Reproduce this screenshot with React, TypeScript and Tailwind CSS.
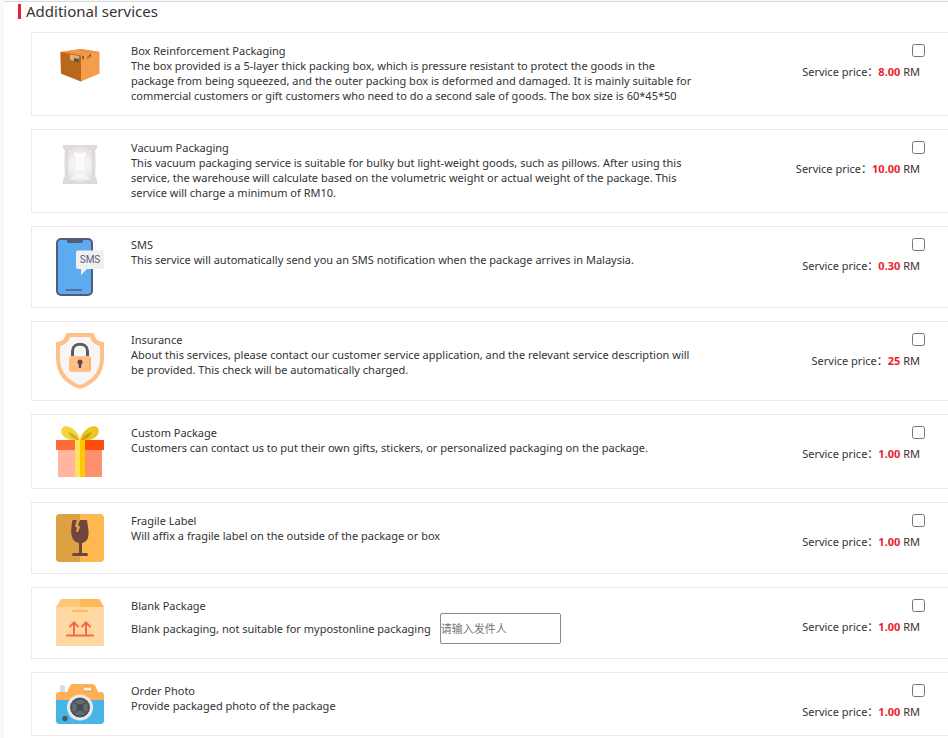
import { useId } from "react";
import type { ReactNode } from "react";

type Service = {
  name: string;
  description: string;
  price: string;
  icon: ReactNode;
  placeholder?: string;
};

function BoxIcon() {
  return (
    <svg width="48" height="48" viewBox="0 0 48 48" aria-hidden="true">
      <path d="M4.500 8 25 5l18.500 3v21.500L25 37.500 5 29.500z" fill="#f59d4c" />
      <path d="M4.500 8 25 5l18.500 3L25 11.500z" fill="#ee9142" />
      <path d="M4.500 8 25 11.500v26L5 29.500z" fill="#b9671c" />
      <path d="m14 10.500 9 1.500v6l-9-2z" fill="#dfb27a" />
      <path d="m18 14 5 1v3.500l-5-1z" fill="#5d5550" />
      <path d="M27 12.500v3m-1-2 2-1m4 0v2m2-4v3m-1-2 2-1" stroke="#6b3c17" strokeWidth="1" />
      <path d="m14 7 20 3" stroke="#f2a263" strokeWidth="1" />
    </svg>
  );
}

function VacuumIcon() {
  return (
    <svg width="48" height="48" viewBox="0 0 48 48" aria-hidden="true">
      <defs>
        <radialGradient id="foil">
          <stop offset="0" stopColor="#ffffff" />
          <stop offset="0.6" stopColor="#f0eeef" />
          <stop offset="1" stopColor="#dedadc" />
        </radialGradient>
        <linearGradient id="fold" x1="0" y1="0" x2="0" y2="1">
          <stop offset="0" stopColor="#ffffff" />
          <stop offset="1" stopColor="#edeaec" />
        </linearGradient>
      </defs>
      <path d="M7 4h34v3l-2 3c1 8 1 17 0 25l2 4v4H7v-4l2-4c-1-8-1-17 0-25L7 7z" fill="url(#foil)" />
      <path d="M7 4.500h34M7 42.500h34" stroke="#dcd8da" />
      <path d="M10.500 9c1 8 1 18 0 27M37.500 9c-1 8-1 18 0 27" stroke="#d6d1d4" fill="none" />
      <path d="M12 10c6 3 7 7 7 12s-2 9-7 13m24-25c-6 3-7 7-7 12s2 9 7 13" stroke="#ebe8ea" fill="none" />
      <path d="M10 39c6 0 9-6 14-6s8 6 14 6z" fill="url(#fold)" />
      <path d="M18 11c4 2 8 2 12 0-2 6-2 12 0 18-4-2-8-2-12 0 2-6 2-12 0-18z" fill="#fbfafb" />
    </svg>
  );
}

function SmsIcon() {
  return (
    <svg width="48" height="58" viewBox="0 0 48 58" aria-hidden="true">
      <rect x="1" y="1" width="35" height="56" rx="4" fill="#5eaaf0" stroke="#525b78" strokeWidth="2" />
      <path d="M10 1h18l-2 4H12z" fill="#525b78" />
      <path d="M10.500 52h15" stroke="#525b78" strokeWidth="1.500" strokeLinecap="round" />
      <path d="M22 12.500h24a2 2 0 0 1 2 2v14.500a2 2 0 0 1-2 2H31l-6 6v-6h-3a2 2 0 0 1-2-2V14.500a2 2 0 0 1 2-2z" fill="#f0f0f1" />
      <text x="34" y="25" textAnchor="middle" fontSize="10" fontWeight="400" fill="#586079" fontFamily="Roboto, sans-serif">
        SMS
      </text>
    </svg>
  );
}

function InsuranceIcon() {
  return (
    <svg width="48" height="56" viewBox="0 0 48 56" aria-hidden="true">
      <path d="M10 0h28c0 5 4 9 10 9v16c0 16-9 26-24 31C9 51 0 41 0 25V9c6 0 10-4 10-9z" fill="#ffc088" />
      <path d="M14 4h20c1 4 5 8 10 9v12c0 13-7 22-20 27C11 47 4 38 4 25V13c5-1 9-5 10-9z" fill="#f8f5f7" />
      <path d="M16.500 25v-7c0-9 15-9 15 0v7" fill="none" stroke="#5d5b66" strokeWidth="3" />
      <rect x="13" y="23" width="22" height="16" rx="2.500" fill="#ffc083" />
      <path d="M34 25v12" stroke="#f9b373" strokeWidth="2" />
      <circle cx="24" cy="29" r="2.500" fill="#504d56" />
      <path d="M24 29v5" stroke="#504d56" strokeWidth="2.500" strokeLinecap="round" />
    </svg>
  );
}

function GiftIcon() {
  return (
    <svg width="48" height="51" viewBox="0 0 48 51" aria-hidden="true">
      <path d="M24 14C22 3 10-3 6 2c-3 6 3 12 12 12z" fill="#f5d63a" />
      <path d="M24 14C26 3 38-3 42 2c3 6-3 12-12 12z" fill="#eec51c" />
      <path d="M23 14c-3-5-6-7-11-8 2 5 5 7 9 8z" fill="#d3b322" />
      <path d="M25 14c3-5 6-7 11-8-2 5-5 7-9 8z" fill="#c9a40e" />
      <path d="M2 24h22v27H2z" fill="#ffb5a0" />
      <path d="M24 24h22v27H24z" fill="#ff906d" />
      <path d="M0 14h24v10H0z" fill="#ff6c3a" />
      <path d="M24 14h24v10H24z" fill="#ff4b08" />
      <path d="M19 14h5v37h-5z" fill="#ffe15a" />
      <path d="M24 14h5v37h-5z" fill="#fdc900" />
    </svg>
  );
}

function FragileIcon() {
  return (
    <svg width="48" height="48" viewBox="0 0 48 48" aria-hidden="true">
      <rect width="48" height="48" rx="4" fill="#ffb74f" />
      <path d="M4 0h20v48H4a4 4 0 0 1-4-4V4a4 4 0 0 1 4-4z" fill="#dda043" />
      <path
        d="M16.500 6H31c1 8 5 21-5 23v10h4.500a1.500 1.500 0 0 1 0 3h-13a1.500 1.500 0 0 1 0-3H23V29c-10-2-8-15-6.500-23z"
        fill="#70453f"
      />
      <path d="m21 6-2 6 2 2-1 4h2l2-5-2-2 2-5z" fill="#e3a546" />
    </svg>
  );
}

function BlankPackageIcon() {
  return (
    <svg width="48" height="48" viewBox="0 0 48 48" aria-hidden="true">
      <path d="M5 0h38l5 8H0z" fill="#ffc775" />
      <path d="M24 0h19l5 8H24z" fill="#ffb856" />
      <path d="M0 8h48v39H0z" fill="#ffd7a3" />
      <path d="M17 12h14" stroke="#ffb95f" strokeWidth="2" strokeLinecap="round" />
      <g fill="none" stroke="#f46b42" strokeWidth="2" strokeLinecap="round">
        <path d="M11 36.500h26M18 36V23.500m-4 4 4-4 4 4M30 36V23.500m-4 4 4-4 4 4" />
      </g>
    </svg>
  );
}

function CameraIcon() {
  return (
    <svg width="48" height="40" viewBox="0 0 48 40" aria-hidden="true">
      <rect x="4" y="1" width="5" height="8" rx="1.500" fill="#d9dde0" />
      <path d="M3 8h8l3-6c1-2 2-2 4-2h18c2 0 3 1 4 3l2 5h3c2 0 3 1 3 3v6H0v-6c0-2 1-3 3-3z" fill="#ffb057" />
      <path d="M0 16h48v20c0 3-1 4-4 4H4c-3 0-4-1-4-4z" fill="#48b5e7" />
      <rect x="27" y="3" width="9" height="4" rx="0.500" fill="#fff0d6" stroke="#d99a50" />
      <circle cx="24" cy="23.500" r="13" fill="#e6eaeb" />
      <circle cx="24" cy="23.500" r="10" fill="#48515a" />
      <circle cx="24" cy="23.500" r="8" fill="#636b70" />
      <path d="m18 18 12 11M30 18 18 29" stroke="#505960" strokeWidth="2" />
      <circle cx="24" cy="23.500" r="3.500" fill="#434c55" />
      <circle cx="9" cy="34.500" r="2.700" fill="#4c5963" />
    </svg>
  );
}

const services: Service[] = [
  {
    name: "Box Reinforcement Packaging",
    description:
      "The box provided is a 5-layer thick packing box, which is pressure resistant to protect the goods in the package from being squeezed, and the outer packing box is deformed and damaged. It is mainly suitable for commercial customers or gift customers who need to do a second sale of goods. The box size is 60*45*50",
    price: "8.00",
    icon: <BoxIcon />,
  },
  {
    name: "Vacuum Packaging",
    description:
      "This vacuum packaging service is suitable for bulky but light-weight goods, such as pillows. After using this service, the warehouse will calculate based on the volumetric weight or actual weight of the package. This service will charge a minimum of RM10.",
    price: "10.00",
    icon: <VacuumIcon />,
  },
  {
    name: "SMS",
    description: "This service will automatically send you an SMS notification when the package arrives in Malaysia.",
    price: "0.30",
    icon: <SmsIcon />,
  },
  {
    name: "Insurance",
    description:
      "About this services, please contact our customer service application, and the relevant service description will be provided. This check will be automatically charged.",
    price: "25",
    icon: <InsuranceIcon />,
  },
  {
    name: "Custom Package",
    description: "Customers can contact us to put their own gifts, stickers, or personalized packaging on the package.",
    price: "1.00",
    icon: <GiftIcon />,
  },
  {
    name: "Fragile Label",
    description: "Will affix a fragile label on the outside of the package or box",
    price: "1.00",
    icon: <FragileIcon />,
  },
  {
    name: "Blank Package",
    description: "Blank packaging, not suitable for mypostonline packaging",
    price: "1.00",
    icon: <BlankPackageIcon />,
    placeholder: "请输入发件人",
  },
  {
    name: "Order Photo",
    description: "Provide packaged photo of the package",
    price: "1.00",
    icon: <CameraIcon />,
  },
];

function ServiceCard({ service }: { service: Service }) {
  const id = useId();

  return (
    <li className="flex items-start border border-r-0 border-[#ebebeb] pt-2.5 pr-[23px] pb-3 pl-6">
      <div className="-mb-px shrink-0 pt-px">{service.icon}</div>
      <div className="ml-[27px] min-w-0 max-w-[566px] flex-1">
        <label htmlFor={id} className="block">
          {service.name}
        </label>
        {service.placeholder ? (
          <div className="flex items-center gap-[9px]">
            <p>{service.description}</p>
            <input
              type="text"
              aria-label="Sender"
              placeholder={service.placeholder}
              className="h-[31px] w-[121px] rounded-xs border border-[#8a8a8a] placeholder:text-[#757575]"
            />
          </div>
        ) : (
          <p>{service.description}</p>
        )}
      </div>
      <div className="ml-auto flex shrink-0 flex-col items-end gap-[7px] pt-px">
        <input id={id} type="checkbox" className="size-[13px]" />
        <p className="pr-[5px]">
          Service price：<strong className="font-bold text-[#ed1c2e]">{service.price}</strong> RM
        </p>
      </div>
    </li>
  );
}

export default function App() {
  return (
    <div className="bg-[#f7f8fa] pt-px pl-1 font-['Noto_Sans','Noto_Sans_CJK_SC',sans-serif] text-[11px] leading-[15px] text-[#333333]">
      <main className="border-t border-[#d8dbdd] bg-white pt-0.5 pb-0.5 pl-3.5">
        <h1 className="flex items-center gap-[5px] text-[15px]">
          <span className="h-[15px] w-[3px] bg-[#ed1c2e]" />
          Additional services
        </h1>
        <ul className="mt-[13px] ml-[13px] flex flex-col gap-[13px]">
          {services.map((service) => (
            <ServiceCard key={service.name} service={service} />
          ))}
        </ul>
      </main>
    </div>
  );
}
